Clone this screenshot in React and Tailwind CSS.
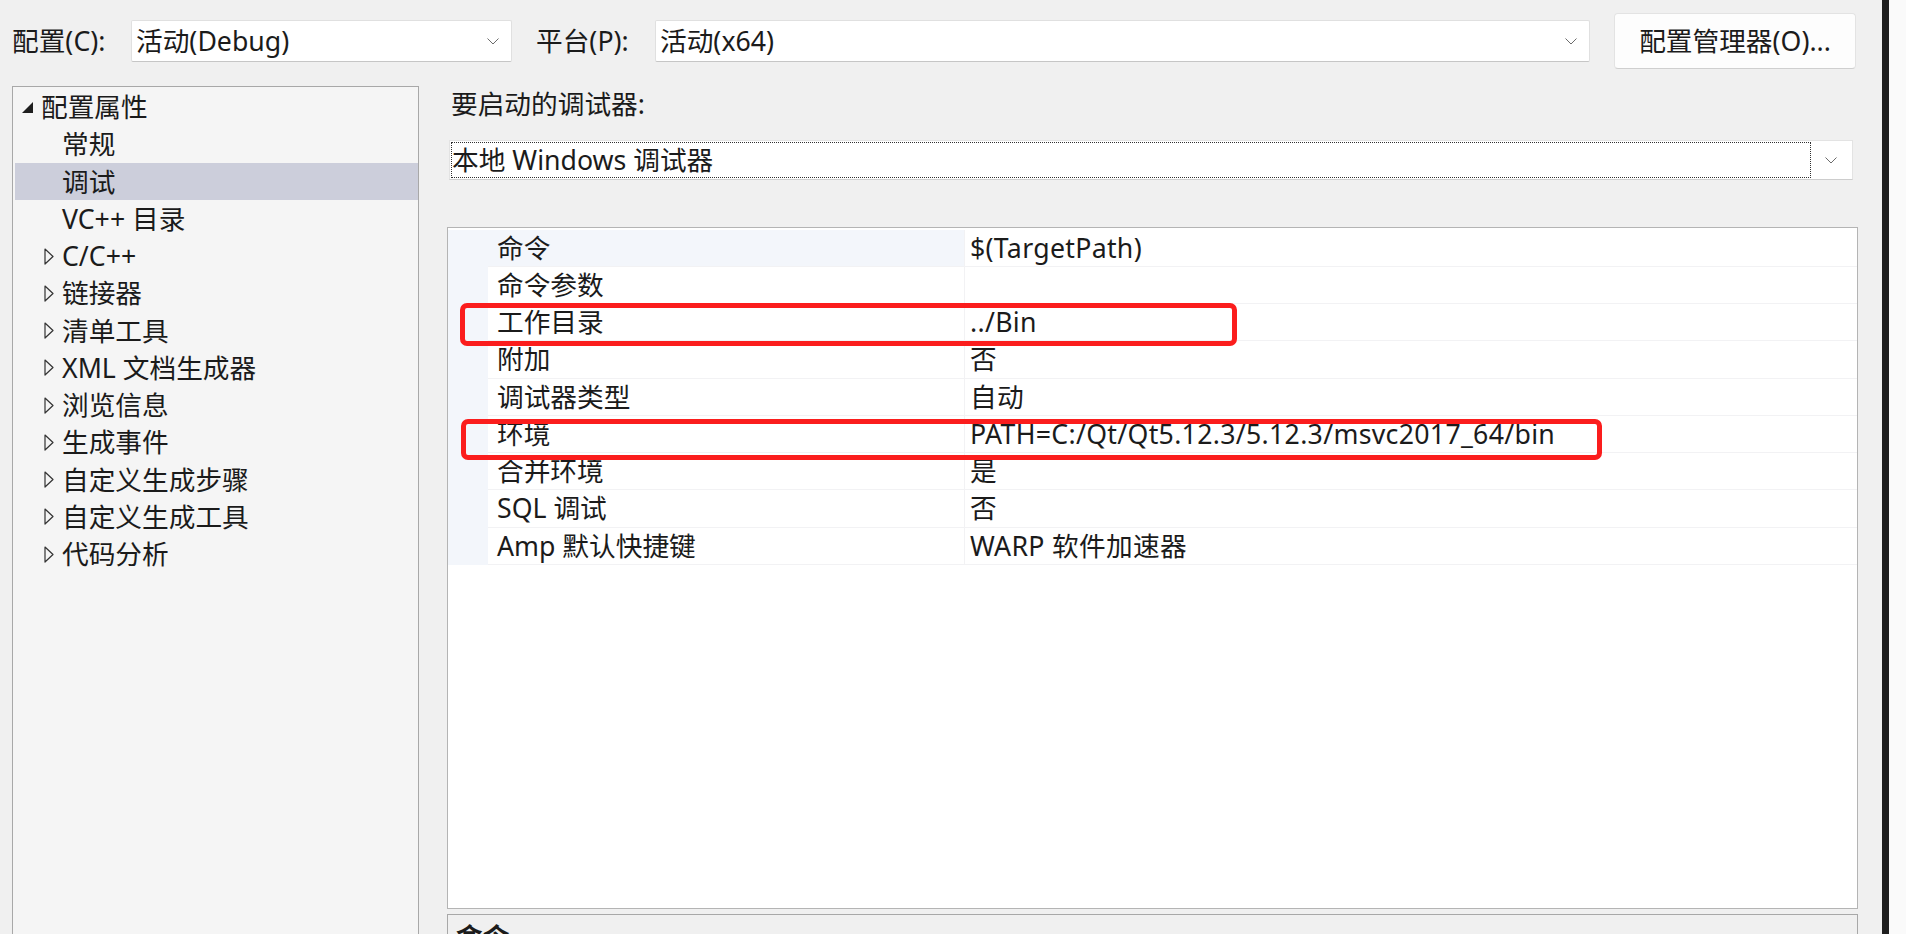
import React from "react";

const FONT = "font-['Noto_Sans','Noto_Sans_CJK_SC',sans-serif]";

const treeItems = [
  { label: "配置属性", level: 0, state: "open" },
  { label: "常规", level: 1 },
  { label: "调试", level: 1, selected: true },
  { label: "VC++ 目录", level: 1 },
  { label: "C/C++", level: 1, state: "closed" },
  { label: "链接器", level: 1, state: "closed" },
  { label: "清单工具", level: 1, state: "closed" },
  { label: "XML 文档生成器", level: 1, state: "closed" },
  { label: "浏览信息", level: 1, state: "closed" },
  { label: "生成事件", level: 1, state: "closed" },
  { label: "自定义生成步骤", level: 1, state: "closed" },
  { label: "自定义生成工具", level: 1, state: "closed" },
  { label: "代码分析", level: 1, state: "closed" },
];

const props = [
  ["命令", "$(TargetPath)"],
  ["命令参数", ""],
  ["工作目录", "../Bin"],
  ["附加", "否"],
  ["调试器类型", "自动"],
  ["环境", "PATH=C:/Qt/Qt5.12.3/5.12.3/msvc2017_64/bin"],
  ["合并环境", "是"],
  ["SQL 调试", "否"],
  ["Amp 默认快捷键", "WARP 软件加速器"],
];

function Chevron() {
  return (
    <svg width="12" height="7" viewBox="0 0 12 7">
      <path d="M0.5 0.5 L6 6 L11.5 0.5" fill="none" stroke="#6b6b6b" strokeWidth="1" />
    </svg>
  );
}

function OpenArrow() {
  return (
    <svg width="12" height="11" viewBox="0 0 12 11">
      <path d="M12 0 L12 11 L1 11 Z" fill="#1e1e1e" />
    </svg>
  );
}

function ClosedArrow() {
  return (
    <svg width="10" height="17" viewBox="0 0 10 17">
      <path d="M1 1 L9 8.5 L1 16 Z" fill="none" stroke="#333333" strokeWidth="1.2" strokeLinejoin="round" />
    </svg>
  );
}

function Combo({ width, text }) {
  return (
    <div
      className={`${width} h-[42px] shrink-0 flex items-center bg-white border border-[#e0e0e0] border-b-[#c6c6c6] rounded-[2px] pl-[4px] pr-[12px]`}
    >
      <span className="flex-1 leading-none">{text}</span>
      <Chevron />
    </div>
  );
}

function TreeRow({ item }) {
  const pad = item.level === 0 ? "pl-[6px]" : item.state ? "pl-[29px]" : "pl-[47px]";
  return (
    <div
      className={`h-[37.25px] flex items-center gap-[8px] ${pad} ${
        item.selected ? "bg-[#cccedb]" : ""
      }`}
    >
      {item.state === "open" && <OpenArrow />}
      {item.state === "closed" && <ClosedArrow />}
      <span className="whitespace-nowrap">{item.label}</span>
    </div>
  );
}

export default function App() {
  return (
    <div
      className={`w-[1906px] h-[934px] overflow-hidden flex bg-[#f0f0f0] text-[#1b1b1b] text-[26.7px] ${FONT}`}
    >
      <div className="w-[1882px] flex flex-col">
        {/* top toolbar */}
        <div className="h-[86px] pb-[4px] flex items-center pl-[12px] shrink-0">
          <span className="w-[119px] shrink-0">配置(C):</span>
          <Combo width="w-[381px]" text="活动(Debug)" />
          <span className="ml-[24px] w-[119px] shrink-0">平台(P):</span>
          <Combo width="w-[935px]" text="活动(x64)" />
          <button className="ml-[24px] w-[242px] h-[56px] shrink-0 bg-[#fdfdfd] border border-[#e3e3e3] border-b-[#cfcfcf] rounded-[4px]">
            配置管理器(O)...
          </button>
        </div>

        <div className="flex flex-1 min-h-0">
          {/* tree */}
          <div className="ml-[12px] w-[407px] border border-b-0 border-[#a8a8a8] bg-[#f5f5f5] pt-[1.5px] pl-[2px]">
            {treeItems.map((item) => (
              <TreeRow key={item.label} item={item} />
            ))}
          </div>

          {/* right side */}
          <div className="ml-[28px] w-[1411px] flex flex-col min-h-0 overflow-hidden">
            <div className="h-[36px] shrink-0 leading-[36px] pl-[4px]">要启动的调试器:</div>
            <div className="mt-[18px] ml-[2px] w-[1404px] h-[40px] shrink-0 flex bg-white border border-[#e3e3e3] border-b-[#cdcdcd] p-[1px]">
              <div className="flex-1 border border-dotted border-[#303030] flex items-center leading-none">
                本地 Windows 调试器
              </div>
              <div className="w-[40px] flex items-center justify-center">
                <Chevron />
              </div>
            </div>

            {/* property grid */}
            <div className="relative mt-[47px] h-[682px] shrink-0 bg-white border border-[#b4b4b4] pt-[1.5px]">
              {props.map(([name, value], i) => (
                <div key={name} className="flex h-[37.25px]">
                  <div className="w-[40px] bg-[#f3f6fb]" />
                  <div
                    className={`w-[476px] pl-[9px] flex items-center border-b border-[#f2f2f4] whitespace-nowrap ${
                      i === 0 ? "bg-[#f3f6fb]" : ""
                    }`}
                  >
                    {name}
                  </div>
                  <div className="flex-1 pl-[5px] flex items-center border-b border-l border-[#f2f2f4] whitespace-nowrap tracking-[0.3px]">
                    {value}
                  </div>
                </div>
              ))}

              {/* red highlight boxes */}
              <div className="absolute left-[12px] top-[75px] w-[777px] h-[43px] border-[5px] border-[#fb1d1d] rounded-[7px]" />
              <div className="absolute left-[13px] top-[191px] w-[1141px] h-[41px] border-[5px] border-[#fb1d1d] rounded-[7px]" />
            </div>

            {/* description */}
            <div className="mt-[5px] flex-1 min-h-0 shrink-0 border border-b-0 border-[#a8a8a8] bg-[#f0f0f0] pt-[4px] pl-[8px]">
              <div className="leading-[36px] font-bold">命令</div>
            </div>
          </div>
        </div>
      </div>
      <div className="w-[7px] bg-[#1f1f1f]" />
      <div className="flex-1 bg-[#fafafa]" />
    </div>
  );
}
